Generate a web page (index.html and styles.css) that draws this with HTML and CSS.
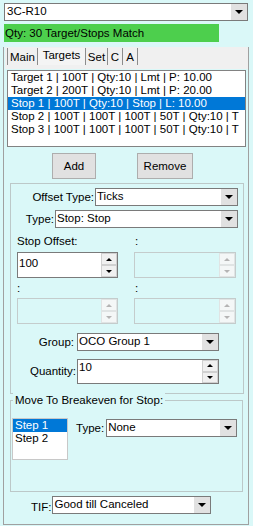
FILE: index.html
```html
<!DOCTYPE html>
<html>
<head>
<meta charset="utf-8">
<link rel="stylesheet" href="styles.css">
</head>
<body>
<div class="combo topcombo"><span class="val">3C-R10</span><span class="dd"><i class="tri"></i></span></div>
<div class="status">Qty: 30 Target/Stops Match</div>
<div class="page">
  <div class="tabs">
    <span class="tab first w-main">Main</span><span class="tab sel w-targets">Targets</span><span class="tab w-set">Set</span><span class="tab w-c">C</span><span class="tab w-a">A</span>
  </div>
  <div class="list biglist">
    <div class="item">Target 1 | 100T | Qty:10 | Lmt | P: 10.00</div>
    <div class="item">Target 2 | 200T | Qty:10 | Lmt | P: 20.00</div>
    <div class="item selitem">Stop 1 | 100T | Qty:10 | Stop | L: 10.00</div>
    <div class="item">Stop 2 | 100T | 100T | 100T | 50T | Qty:10 | T</div>
    <div class="item">Stop 3 | 100T | 100T | 100T | 50T | Qty:10 | T</div>
  </div>
  <div class="btnrow">
    <div class="btn add">Add</div>
    <div class="btn remove">Remove</div>
  </div>
  <div class="gb gb1">
    <div class="frow r-top r-offset">
      <span class="lbl">Offset Type:</span>
      <div class="combo w-offset"><span class="val">Ticks</span><span class="dd"><i class="tri"></i></span></div>
    </div>
    <div class="frow r-top r-type">
      <span class="lbl">Type:</span>
      <div class="combo w-type"><span class="val">Stop: Stop</span><span class="dd"><i class="tri"></i></span></div>
    </div>
    <div class="offgrid">
      <span class="glbl">Stop Offset:</span>
      <span class="glbl">:</span>
      <div class="num"><span class="nval pad3">100</span><span class="spin"><i class="sb up"></i><i class="sb dn"></i></span></div>
      <div class="num dis"><span class="nval"></span><span class="spin"><i class="sb up"></i><i class="sb dn"></i></span></div>
      <span class="glbl">:</span>
      <span class="glbl">:</span>
      <div class="num dis"><span class="nval"></span><span class="spin"><i class="sb up"></i><i class="sb dn"></i></span></div>
      <div class="num dis"><span class="nval"></span><span class="spin"><i class="sb up"></i><i class="sb dn"></i></span></div>
    </div>
    <div class="frow r-group">
      <span class="lbl">Group:</span>
      <div class="combo w-group"><span class="val">OCO Group 1</span><span class="dd"><i class="tri"></i></span></div>
    </div>
    <div class="frow r-qty">
      <span class="lbl lbl-qty">Quantity:</span>
      <div class="num w-qty"><span class="nval">10</span><span class="spin"><i class="sb up"></i><i class="sb dn"></i></span></div>
    </div>
  </div>
  <div class="gb gb2">
    <span class="gtitle">Move To Breakeven for Stop:</span>
    <div class="bebody">
      <div class="list steplist">
        <div class="item selitem">Step 1</div>
        <div class="item">Step 2</div>
      </div>
      <div class="frow r-betype">
        <span class="lbl">Type:</span>
        <div class="combo w-betype"><span class="val">None</span><span class="dd"><i class="tri"></i></span></div>
      </div>
    </div>
  </div>
  <div class="frow r-tif">
    <span class="lbl lbl-tif">TIF:</span>
    <div class="combo w-tif"><span class="val">Good till Canceled</span><span class="dd"><i class="tri"></i></span></div>
  </div>
</div>
</body>
</html>
```

FILE: styles.css
```css
* { box-sizing: border-box; }
html, body {
  margin: 0;
  padding: 0;
}
body {
  width: 253px;
  height: 526px;
  overflow: hidden;
  background: #daf8f8;
  font-family: "Liberation Sans", Arial, sans-serif;
  font-size: 11.5px;
  color: #000;
}

/* combo box */
.combo {
  display: flex;
  height: 18px;
  background: #fff;
  border: 1px solid #7a7a7a;
}
.combo .val {
  flex: 1;
  padding-left: 1px;
  line-height: 15px;
  white-space: nowrap;
  overflow: hidden;
}
.combo .dd {
  width: 16px;
  background: #e1e1e1;
  display: flex;
  align-items: center;
  justify-content: center;
}
.tri {
  display: block;
  width: 0;
  height: 0;
  border-left: 4px solid transparent;
  border-right: 4px solid transparent;
  border-top: 4px solid #000;
}

.topcombo {
  margin: 3px 0 0 4px;
  width: 244px;
}
.topcombo .val { padding-left: 2px; }

.status {
  margin: 3px 0 0 4px;
  width: 215px;
  height: 18px;
  line-height: 18px;
  padding-left: 1px;
  background: #4dcf4d;
}

/* page / tab control */
.page {
  margin: 5px 0 0 3px;
  width: 246px;
  height: 478px;
  border-left: 1px solid #a0a0a0;
  border-right: 1px solid #a0a0a0;
  border-bottom: 1px solid #a0a0a0;
}
.tabs {
  margin-left: 1px;
  width: 243px;
  height: 22px;
  background: #f0f0f0;
  display: flex;
  align-items: flex-start;
  padding: 1px 0 0 2px;
}
.tab {
  height: 17px;
  line-height: 17px;
  padding-top: 1px;
  text-align: center;
  border-right: 1px solid #8c8c8c;
  white-space: nowrap;
}
.tab.first { border-left: 1px solid #8c8c8c; }
.tab.sel { padding-top: 0; line-height: 14px; background: #f4f4f4; }
.w-main { width: 31px; }
.w-targets { width: 48px; }
.w-set { width: 22px; }
.w-c { width: 15px; }
.w-a { width: 15px; }

/* list boxes */
.list {
  background: #fff;
  border: 1px solid #828282;
  overflow: hidden;
}
.item {
  height: 13px;
  line-height: 13px;
  padding-left: 3px;
  white-space: nowrap;
}
.selitem {
  background: #0078d7;
  color: #fff;
}
.biglist {
  margin: 1px 0 0 3px;
  width: 239px;
  height: 77px;
}

/* buttons */
.btnrow {
  display: flex;
  margin-top: 6px;
}
.btn {
  height: 26px;
  line-height: 24px;
  text-align: center;
  background: #e1e1e1;
  border: 1px solid #adadad;
}
.add { margin-left: 48px; width: 44px; }
.remove { margin-left: 41px; width: 56px; }

/* group boxes */
.gb {
  border: 1px solid #bcc8c8;
}
.gb1 {
  margin: 4px 0 0 6px;
  width: 234px;
  height: 211px;
}
.frow {
  display: flex;
  align-items: center;
  justify-content: flex-end;
}
.frow .lbl {
  white-space: nowrap;
  padding-right: 1px;
}
.r-top { margin-right: 5px; }
.r-offset { margin-top: 4px; }
.r-type { margin-top: 4px; }
.w-offset { width: 143px; }
.w-type { width: 183px; }

.offgrid {
  display: grid;
  grid-template-columns: 101px 102px;
  grid-template-rows: 15px 26px 14px 26px;
  column-gap: 16px;
  row-gap: 3px;
  margin: 6px 0 0 6px;
}
.glbl {
  line-height: 14px;
  white-space: nowrap;
}
.offgrid .glbl:nth-child(2), .offgrid .glbl:nth-child(6) { padding-left: 1px; }

/* numeric up-down */
.num {
  display: flex;
  background: #fff;
  border: 1px solid #7a7a7a;
  height: 26px;
}
.nval {
  flex: 1;
  padding-left: 1px;
  line-height: 14px;
}
.nval.pad3 { padding-top: 3px; }
.spin {
  width: 16px;
  display: flex;
  flex-direction: column;
  padding: 0 0 0 0;
}
.sb {
  flex: 1;
  background: #f0f0f0;
  border: 1px solid #d0d0d0;
  display: flex;
  align-items: center;
  justify-content: center;
}
.sb.up::after {
  content: "";
  border-left: 3px solid transparent;
  border-right: 3px solid transparent;
  border-bottom: 3px solid #000;
}
.sb.dn::after {
  content: "";
  border-left: 3px solid transparent;
  border-right: 3px solid transparent;
  border-top: 3px solid #000;
}
.num.dis {
  background: transparent;
  border-color: #c4cccc;
}
.num.dis .sb { background: #f4f7f7; border-color: #e0e4e4; }
.num.dis .sb.up::after { border-bottom-color: #b4b4b4; }
.num.dis .sb.dn::after { border-top-color: #b4b4b4; }

.r-group { margin: 9px 24px 0 0; }
.r-group .lbl { padding-right: 3px; }
.w-group { width: 142px; }
.r-qty { margin: 8px 24px 0 0; align-items: flex-start; }
.lbl-qty { padding-right: 3px; padding-top: 6px; }
.w-qty { width: 142px; height: 25px; }

/* breakeven group */
.gb2 {
  margin: 6px 0 0 6px;
  width: 233px;
  height: 92px;
}
.gtitle {
  display: inline-block;
  margin: -8px 0 0 2px;
  padding: 0 2px;
  line-height: 14px;
  background: #daf8f8;
  vertical-align: top;
}
.bebody {
  display: flex;
  align-items: flex-start;
  margin-top: 5px;
}
.steplist {
  margin-left: 1px;
  width: 56px;
  height: 42px;
  border-color: #c8c8c8;
}
.steplist .item { padding-left: 2px; }
.r-betype { margin-left: 8px; margin-top: 1px; }
.r-betype .lbl { padding-right: 2px; }
.w-betype { width: 131px; }

.r-tif {
  justify-content: flex-start;
  align-items: flex-end;
  margin: 4px 0 0 27px;
}
.lbl-tif { line-height: 14px; padding-right: 0; }
.w-tif { width: 159px; }
```
